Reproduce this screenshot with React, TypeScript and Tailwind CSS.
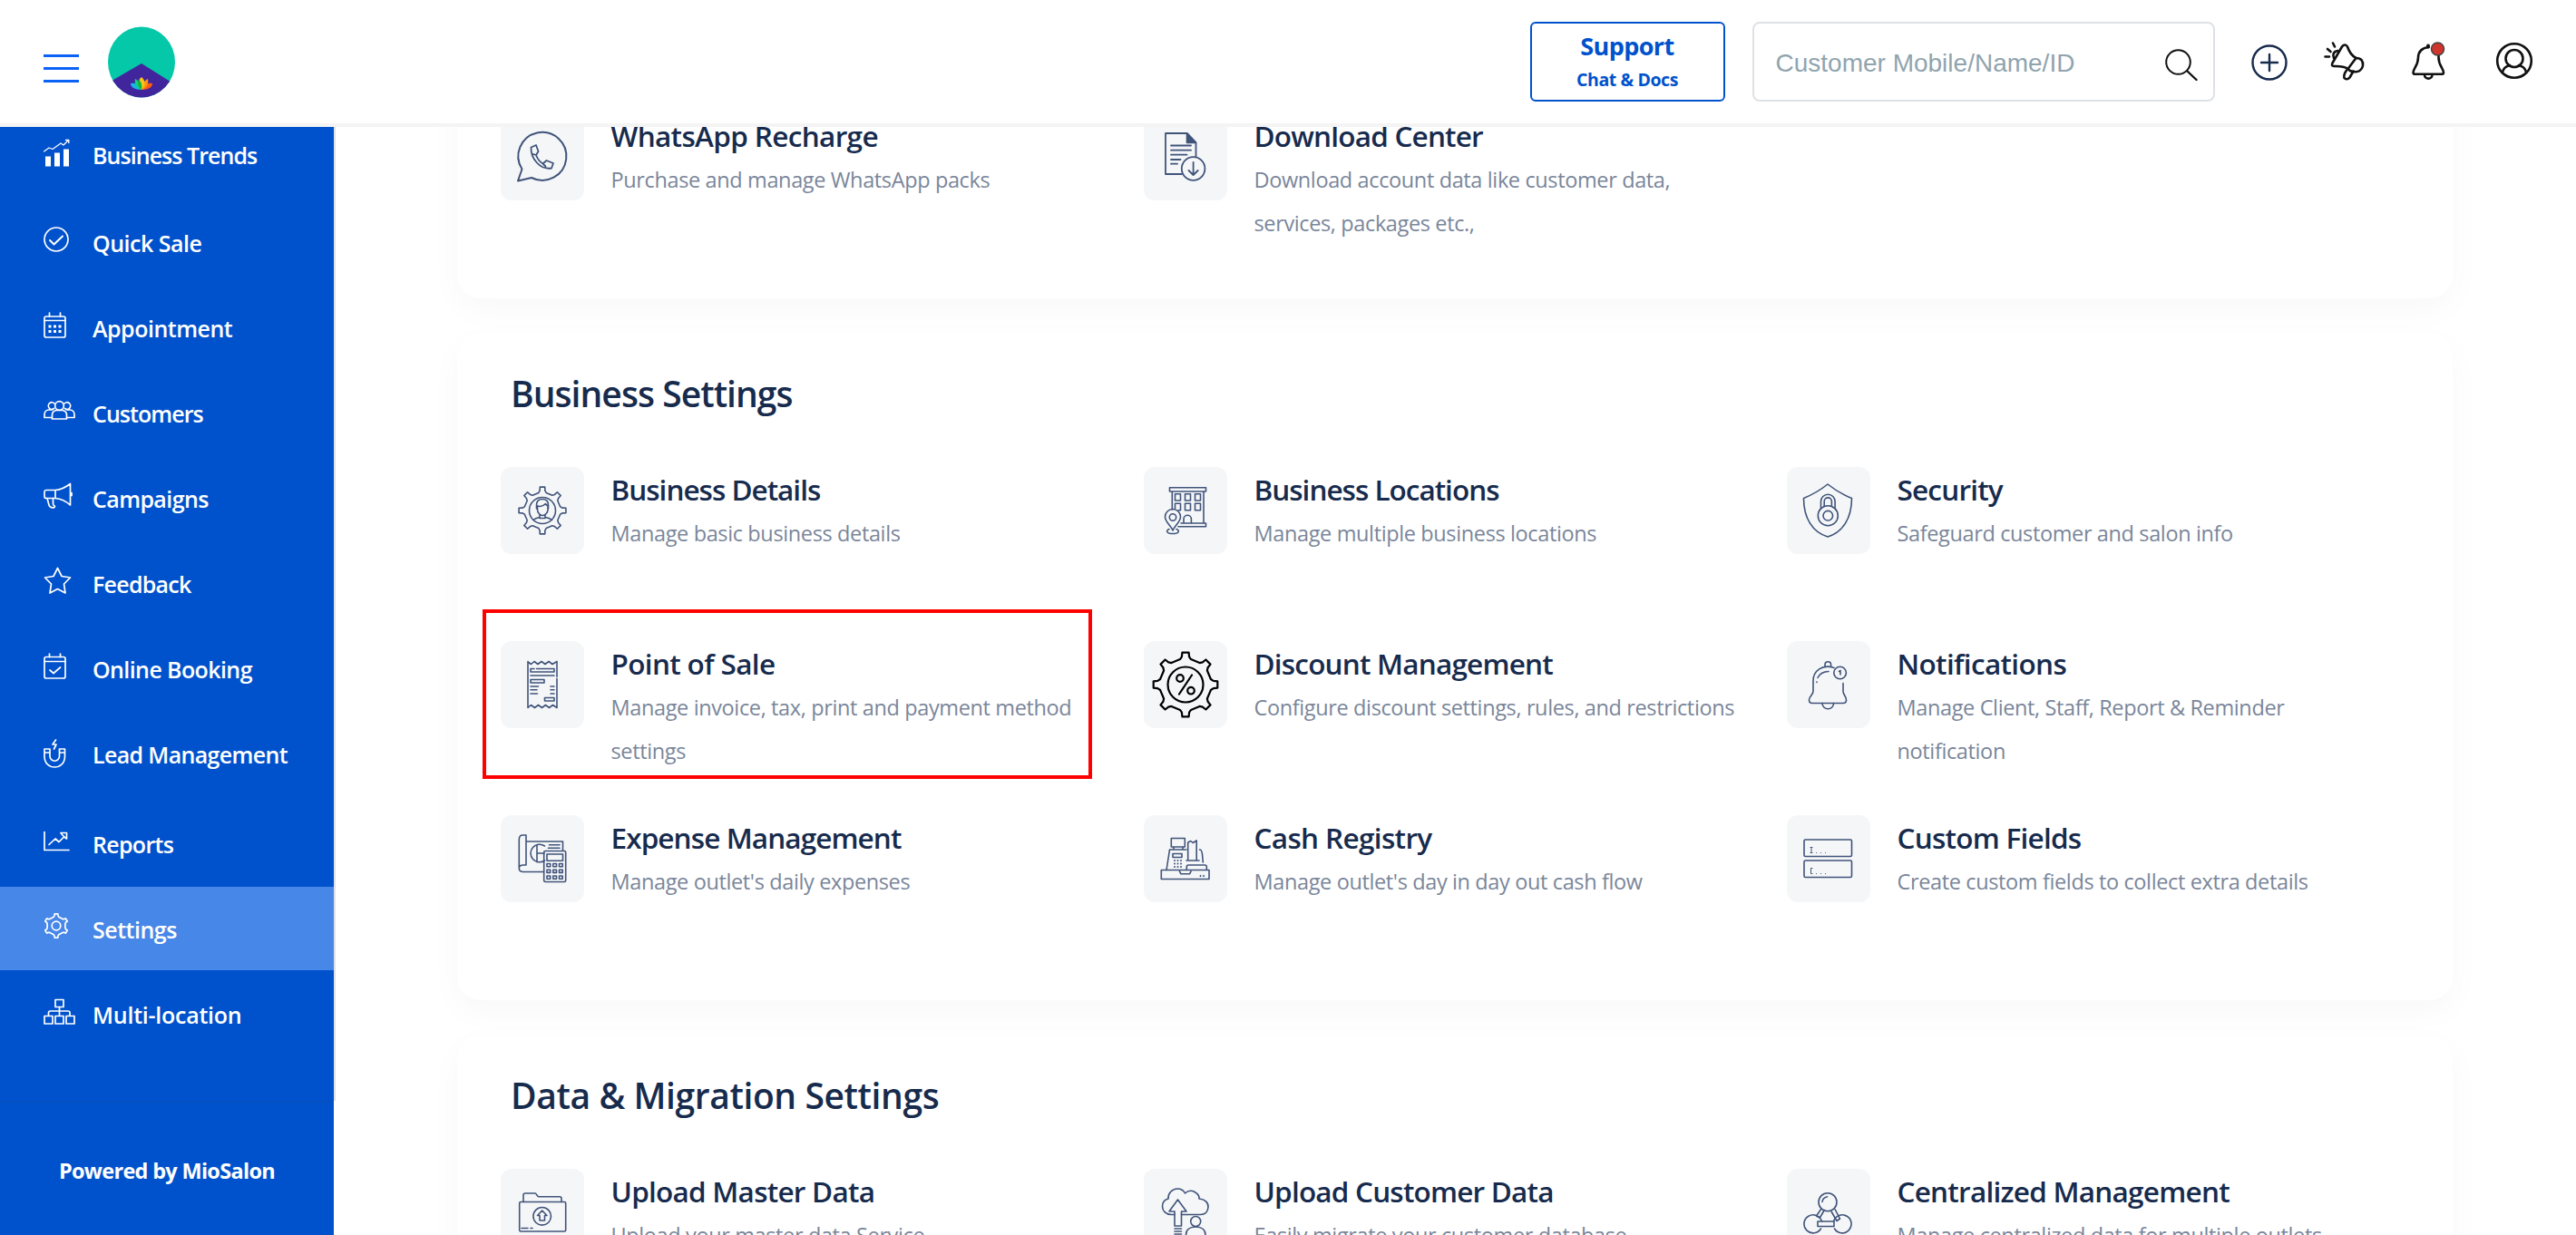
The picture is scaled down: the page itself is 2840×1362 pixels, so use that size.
import type { ReactNode } from "react";

type Item = { title: string; text: string; icon: ReactNode; tracking?: string; active?: boolean };
type NavItem = { label: string; icon: ReactNode; row: string; tracking: string; active?: boolean };

// closed outline of an eight (or six) toothed wheel
const gear = (cx: number, cy: number, outer: number, inner: number, teeth: number) => {
  const step = (Math.PI * 2) / teeth;
  const pts: string[] = [];
  for (let i = 0; i < teeth; i++) {
    const a = i * step - Math.PI / 2;
    [
      [-0.27, inner],
      [-0.17, inner + (outer - inner) * 0.35],
      [-0.13, outer],
      [0.13, outer],
      [0.17, inner + (outer - inner) * 0.35],
      [0.27, inner],
    ].forEach(([o, r]) => {
      pts.push(`${(cx + r * Math.cos(a + o * step)).toFixed(1)} ${(cy + r * Math.sin(a + o * step)).toFixed(1)}`);
    });
  }
  return `M${pts.join("L")}Z`;
};

const TileIcon = ({ children, dark }: { children: ReactNode; dark?: boolean }) => (
  <svg
    viewBox="0 0 92 96"
    className={dark ? "h-24 w-[92px] text-black" : "h-24 w-[92px] text-[#40547a]"}
    fill="none"
    stroke="currentColor"
    strokeWidth={dark ? 2.2 : 1.6}
    strokeLinecap="round"
    strokeLinejoin="round"
  >
    {children}
  </svg>
);

const NavIcon = ({ children }: { children: ReactNode }) => (
  <svg
    viewBox="0 0 40 40"
    className="mt-[25px] h-10 w-10 shrink-0"
    fill="none"
    stroke="currentColor"
    strokeWidth="1.7"
    strokeLinecap="round"
    strokeLinejoin="round"
  >
    {children}
  </svg>
);

const navItems: NavItem[] = [
  {
    label: "Business Trends",
    row: "h-[97px]",
    tracking: "tracking-[-0.95px]",
    icon: (
      <NavIcon>
        <path d="M2 23.5h6v11H2zM12 19.5h6v15h-6zM22 15.5h6v19h-6z" fill="currentColor" stroke="none" />
        <path d="M.5 18 6 14l4 1.5L19 9l3 2 5-5" strokeWidth="1.2" />
        <path d="M24.5 5.5h3.3v3" strokeWidth="1.4" />
      </NavIcon>
    ),
  },
  {
    label: "Quick Sale",
    row: "h-[94px]",
    tracking: "tracking-[-0.5px]",
    icon: (
      <NavIcon>
        <circle cx="14" cy="18" r="13" />
        <path d="m7 19 4.5 4.5 9.5-9" strokeWidth="2" />
      </NavIcon>
    ),
  },
  {
    label: "Appointment",
    row: "h-[94px]",
    tracking: "tracking-[-0.5px]",
    icon: (
      <NavIcon>
        <rect x="1" y="9" width="23" height="23" rx="2" />
        <path d="M1 13.5h23M6.5 5v4M18.5 5v4" />
        <path d="M5.5 20h3M11 20h3M16.5 20h3M5.5 25.5h3M11 25.5h3M16.5 25.5h3" strokeWidth="3" strokeLinecap="butt" />
      </NavIcon>
    ),
  },
  {
    label: "Customers",
    row: "h-[94px]",
    tracking: "tracking-[-0.95px]",
    icon: (
      <NavIcon>
        <circle cx="17.5" cy="13.5" r="4.8" />
        <path d="M9.5 28v-4.5c0-3 2-4.5 4.5-5h7c2.5.5 4.5 2 4.5 5V28z" />
        <path d="M12 11a3.8 3.8 0 1 0-.5 5.5M23 11a3.8 3.8 0 1 1 .5 5.5M9 26.500H1v-3c0-3 2-5.500 5-5.500h3.500M26 26.500h8v-3c0-3-2-5.500-5-5.500h-3.500" />
      </NavIcon>
    ),
  },
  {
    label: "Campaigns",
    row: "h-[94px]",
    tracking: "tracking-[-0.6px]",
    icon: (
      <NavIcon>
        <path d="M13 12.5H3a2 2 0 0 0-2 2v5a2 2 0 0 0 2 2h10zM13 12.5c6-.5 12-3.500 16.500-7V29c-4.500-4-10.500-7-16.500-7.500M31 15.500v3" />
        <path d="M4 21.5 6 29c1 3.500 6.500 3.500 6.500 1.500 0-1-2-.5-2-3v-6" />
      </NavIcon>
    ),
  },
  {
    label: "Feedback",
    row: "h-[94px]",
    tracking: "tracking-[-0.75px]",
    icon: (
      <NavIcon>
        <path d="m15.500 4.500 4.500 9 9.500 1.500-7 7 1.500 10-8.500-4.500L7 32l1.500-10-7-7 9.500-1.500z" />
      </NavIcon>
    ),
  },
  {
    label: "Online Booking",
    row: "h-[94px]",
    tracking: "tracking-[-0.6px]",
    icon: (
      <NavIcon>
        <rect x="1" y="8.5" width="23" height="23.5" rx="2" />
        <path d="M1 13.5h23M6.5 5v3.500M18.500 5v3.500" />
        <path d="m7 23 4 3.500 7.500-6.500" />
      </NavIcon>
    ),
  },
  {
    label: "Lead Management",
    row: "h-[99px]",
    tracking: "tracking-[-0.65px]",
    icon: (
      <NavIcon>
        <path d="M1 16h6v8a5 5 0 0 0 10.500 0v-8h6v8C23.500 32 18 36 12.200 36S1 32 1 24zM1 20h6M17.500 20h6" />
        <path d="m13.500 6-3.500 5h4l-2.500 5" />
      </NavIcon>
    ),
  },
  {
    label: "Reports",
    row: "h-[94px]",
    tracking: "tracking-[-0.7px]",
    icon: (
      <NavIcon>
        <path d="M1 8.500v20h27" />
        <path d="m6 22.500 7-6.500 4 3.500L22.500 14M19 9.500h6.500v6.500l-2-1.500-3-3z" />
      </NavIcon>
    ),
  },
  {
    label: "Settings",
    row: "h-[92px]",
    tracking: "tracking-[-0.5px]",
    active: true,
    icon: (
      <NavIcon>
        <path d={gear(14, 18, 13.2, 10.2, 6)} />
        <circle cx="14" cy="18" r="4.8" />
      </NavIcon>
    ),
  },
  {
    label: "Multi-location",
    row: "h-[94px]",
    tracking: "tracking-[-0.25px]",
    icon: (
      <NavIcon>
        <path d="M13 5.500h9v8h-9zM1 23.500h9V32H1zM13 23.500h9V32h-9zM25 23.500h9V32h-9zM17.500 13.500v10M5.500 23.500V20a2 2 0 0 1 2-2H27a2 2 0 0 1 2 2v3.500" />
      </NavIcon>
    ),
  },
];

const accountItems: Item[] = [
  {
    title: "WhatsApp Recharge",
    text: "Purchase and manage WhatsApp packs",
    icon: (
      <TileIcon>
        <path d="M23.500 61.500A26.500 26.500 0 1 1 34 71l-15 3.500z" strokeWidth="2" />
        <path d="m33.500 37.500 5.500-2.500 2.500 7-2.500 4c1.500 4 4 7.500 7.500 9.500l4-3.500 7.500 3-2 5.500c-13 2-23-11-22.500-23zM39 46l-3-1M46.500 55.500l3 3" strokeWidth="1.8" />
      </TileIcon>
    ),
  },
  {
    title: "Download Center",
    text: "Download account data like customer data,\nservices, packages etc.,",
    tracking: "tracking-[-0.8px]",
    icon: (
      <TileIcon>
        <path d="M42 67H24V22h24l9.500 10v16" strokeWidth="1.8" />
        <path d="M47.500 22v10.500h10z" fill="currentColor" />
        <path d="M30 35.500h22M30 40.700h22M30 45.700h17.500M30 51h10.500M30 55.700h7" strokeWidth="1.8" />
        <circle cx="54.600" cy="61" r="12.800" strokeWidth="1.8" />
        <path d="M54.600 54v13.500M49.500 63l5.100 5 5.100-5" strokeWidth="1.8" />
      </TileIcon>
    ),
  },
];

const businessItems: Item[] = [
  {
    title: "Business Details",
    text: "Manage basic business details",
    tracking: "tracking-[-1px]",
    icon: (
      <TileIcon>
        <path d={gear(46, 48, 26, 20, 8)} />
        <circle cx="46" cy="48" r="14.500" />
        <path d="M39.500 46v-4c0-4.500 3-6.500 6.500-6.500s6.500 2 6.500 6.500v4M40.500 43c3 1 7-.5 9-2.500.5 1.500 1.500 2 2.500 2.500v4c0 3.500-3 6.500-5.800 6.500S40.500 50.500 40.500 47zM43 53v3.500h6V53M36 58.500c2-2 4.500-2.500 7-3M56.500 58.500c-2-2-4.500-2.500-7-3" />
      </TileIcon>
    ),
  },
  {
    title: "Business Locations",
    text: "Manage multiple business locations",
    tracking: "tracking-[-1px]",
    icon: (
      <TileIcon>
        <path d="M28.500 22.700h40V27h-40zM31.300 27v20M66 27v35M41 62h27.500v3.700H38M44 62v-4.500a4.200 4.200 0 0 1 8.400 0V62" />
        <path d="M34.500 29.700h6V37h-6zM45.500 29.700h6V37h-6zM56.500 29.700h6V37h-6zM38 47.700h2.500v-7.400h-6V46M45.500 40.300h6v7.400h-6zM56.500 40.300h6v7.400h-6z" />
        <path d="M32 70c-2-5-8.500-9.500-8.500-15a8.500 8.500 0 0 1 17 0C40.500 60.500 34 65 32 70z" />
        <circle cx="32" cy="55.500" r="3.700" />
        <path d="M28 68.500c-4 1.500-3 5 4 5s8-3.500 4-5" />
      </TileIcon>
    ),
  },
  {
    title: "Security",
    text: "Safeguard customer and salon info",
    tracking: "tracking-[-0.8px]",
    icon: (
      <TileIcon>
        <path d="M45 19c8 6.500 17 11.500 26.500 15.500C71.500 56 62 72 45 77 28 72 18.500 56 18.500 34.500 28 30.500 37 25.500 45 19z" />
        <circle cx="45.300" cy="53.700" r="11" />
        <circle cx="45.300" cy="53.700" r="5.300" />
        <path d="M37.500 46v-8a7.800 7.800 0 0 1 15.600 0v8M41.200 43.500V38a4.100 4.100 0 0 1 8.200 0v5.500" />
      </TileIcon>
    ),
  },
  {
    title: "Point of Sale",
    text: "Manage invoice, tax, print and payment method\nsettings",
    active: true,
    icon: (
      <TileIcon>
        <path d="M30 22.500v51M62 22.500v17M62 41.500v32M30 23l3.500 2.500L37 22.500l4 3 4-3 4 3 4-3 4 3 5-3M30 73.500l3.500-3 4 3 4-3 4 3 4-3 4 3 4-3 4.500 3" />
        <path d="M39.500 30.500H59V34H33v-3.500h4M33 38h26M33 42.500h15V46H33zM33 50h8.500M33 53.700h7M33 58h7.500M55 50h4M55 53.700h4M55 58h4M48.500 62.500H59V66H48.500z" />
      </TileIcon>
    ),
  },
  {
    title: "Discount Management",
    text: "Configure discount settings, rules, and restrictions",
    tracking: "tracking-[-0.8px]",
    icon: (
      <TileIcon dark>
        <path d={gear(46, 48, 35.5, 28.5, 8)} />
        <circle cx="46" cy="48" r="19.500" />
        <circle cx="40" cy="41" r="3.800" />
        <circle cx="52" cy="54.700" r="3.800" />
        <path d="M53 37.500 39 58.500" />
      </TileIcon>
    ),
  },
  {
    title: "Notifications",
    text: "Manage Client, Staff, Report & Reminder\nnotification",
    icon: (
      <TileIcon>
        <path d="M42 28v-2a3.300 3.300 0 0 1 6.600 0v2M52 29.500C39 25 29 33 29 44v11c0 5-4.500 5.500-4.500 10 0 2.500 1 3.500 3.500 3.500h34c2.500 0 3.500-1 3.500-3.500 0-4.500-3.500-5-3.500-10v-8.500" />
        <path d="M39 68.500a6.300 6.300 0 0 0 12.600 0M34 40.500c2.500-5 6-7 12-7M33 45v.5" />
        <circle cx="58.600" cy="35" r="6.800" />
        <path d="M57.500 33.500 59 32.500V37" />
      </TileIcon>
    ),
  },
  {
    title: "Expense Management",
    text: "Manage outlet's daily expenses",
    tracking: "tracking-[-0.9px]",
    icon: (
      <TileIcon>
        <path d="M20.300 59V27c0-3 1.500-5 4-5H28v33h-3c-3 0-4.700 1-4.700 3.500s1.700 4 4.700 4h22.500M28 29h40.500v10M53.500 32.700H65M52.500 36.300H65" />
        <path d="M48.500 50a9.800 9.800 0 1 1 0-16M40 32.500v19.300M40 42h8" />
        <rect x="47.700" y="39.500" width="24" height="34" rx="1.500" />
        <path d="M51 43h17.500v7.300H51zM51 53.500h3.700v3.200H51zM57.800 53.500h3.700v3.200h-3.700zM64.500 53.500h3.700v3.200h-3.700zM51 60.200h3.700v3.200H51zM57.800 60.200h3.700v3.200h-3.700zM64.500 60.200h3.700v3.200h-3.700zM51 67h3.700v3.200H51zM57.800 67h3.700v3.200h-3.700zM64.500 67h3.700v3.200h-3.700z" />
      </TileIcon>
    ),
  },
  {
    title: "Cash Registry",
    text: "Manage outlet's day in day out cash flow",
    icon: (
      <TileIcon>
        <path d="M30.300 25.500h15V35h-15zM33 35v3M43 35v3M47 38H28.500L25 60.500M32 42.500h10v4H32zM61.500 38c2 0 2.500 1 3 5l.8 9" />
        <path d="M34 50v.1M37.500 50v.1M41 50v.1M34 53.500v.1M37.500 53.500v.1M41 53.500v.1M34 57v.1M37.500 57v.1M41 57v.1" strokeWidth="2" />
        <path d="M48.700 50V30l3-1.500 2.500 2 4-2.500V50M47 50h14M47.300 60.500V57c0-1 .5-2 2-2h18c1.500 0 2 1 2 2v3.500M19.300 60.500H72v10H19.300zM39.500 62l1.500 2.800h9.500L52 62M62.500 66.500v1M66 66.500v1" />
      </TileIcon>
    ),
  },
  {
    title: "Custom Fields",
    text: "Create custom fields to collect extra details",
    tracking: "tracking-[-0.75px]",
    icon: (
      <TileIcon>
        <rect x="19" y="27" width="52.500" height="18.500" rx="1.500" />
        <rect x="19" y="50" width="52.500" height="18.500" rx="1.500" />
        <path d="M26 35.500h2M27 35.500v6M26 41.500h2M32.500 41.500h.1M37.500 41.500h.1M42.500 41.500h.1M28 58.500h-1.500v6H28M32.500 64.500h.1M37.500 64.500h.1M42.500 64.500h.1" strokeWidth="1" />
      </TileIcon>
    ),
  },
];

const dataItems: Item[] = [
  {
    title: "Upload Master Data",
    text: "Upload your master data Service,",
    tracking: "tracking-[-0.75px]",
    icon: (
      <TileIcon>
        <path d="M25 36.500V29c0-1.500.5-2 2-2h11c1.500 0 2 3.800 4 3.800h23c1.500 0 2 .5 2 2v3.700" />
        <rect x="20.700" y="36.500" width="51" height="32.500" rx="1.500" />
        <circle cx="45.700" cy="52.300" r="9.800" />
        <path d="m45.700 46 5.300 5.500h-2.500V57h-5.500v-5.500h-2.500zM23 65.500h7M33 65.500h2" />
      </TileIcon>
    ),
  },
  {
    title: "Upload Customer Data",
    text: "Easily migrate your customer database",
    tracking: "tracking-[-0.8px]",
    icon: (
      <TileIcon>
        <path d="M34 50.500h-3.500c-6 0-10-4-10-9 0-4.500 3-7.500 6.500-8.500-.5-6 4.500-11 10-11 4 0 7 2 8.500 5 7-6.500 16 .5 15.500 6 6 .5 10.500 4 10 9.500-.5 5-3 8-8.500 8H41.500" />
        <path d="M37.500 34 47 47h-5.500v16H34V47h-6zM34 66h7.500M34 69h7.500M34 72h7.500" />
        <circle cx="57.200" cy="58" r="5.500" />
        <path d="M46.500 78v-5c0-5.500 4-9 10.700-9S68 67.500 68 73v5" />
      </TileIcon>
    ),
  },
  {
    title: "Centralized Management",
    text: "Manage centralized data for multiple outlets",
    tracking: "tracking-[-0.75px]",
    icon: (
      <TileIcon>
        <circle cx="45" cy="36.700" r="10" />
        <path d="M39 36.500c.3-3.300 2-5 5.500-5.800M38 44l-5.500 8 3.800 2 5-8.500M49 47l6 10.500 3.500-2.500-5.500-10.500" />
        <path d="M38.500 58a10 10 0 1 0-1 8M51.500 58a10 10 0 1 1 1 8" />
        <path d="M34 58h18v5.500H34z" />
      </TileIcon>
    ),
  },
];

const SettingTile = ({ item }: { item: Item }) => (
  <div className="relative flex h-48 items-start whitespace-pre">
    <div className="h-24 w-[92px] shrink-0 overflow-hidden rounded-xl bg-[#f5f6f8]">{item.icon}</div>
    <div className="ml-[29.5px] pt-[3px]">
      <h3
        className={`text-[31.5px] leading-[44px] font-semibold text-[#172b4d] ${item.tracking ?? "tracking-[-0.65px]"}`}
      >
        {item.title}
      </h3>
      <p className="mt-[2px] text-[23.5px] leading-[48px] tracking-[-0.37px] text-[#7a869a]">{item.text}</p>
    </div>
    {item.active && <div className="absolute -top-[35px] -left-[20px] h-[187px] w-[672px] border-4 border-[#ff0000]" />}
  </div>
);

const Card = ({ title, tracking, items }: { title?: string; tracking?: string; items: Item[] }) => (
  <section className="w-[2200px] rounded-[26px] bg-white px-12 pt-[38px] pb-3 shadow-[0_12px_36px_rgba(0,0,0,0.03)]">
    <h2 className={`mb-[53px] h-14 pl-[11px] text-[39px] leading-[56px] font-semibold text-[#172b4d] ${tracking ?? ""}`}>
      {title}
    </h2>
    <div className="grid grid-cols-[709px_709px_auto]">
      {items.map((item) => (
        <SettingTile key={item.title} item={item} />
      ))}
    </div>
  </section>
);

const Logo = () => (
  <svg viewBox="0 0 76 80" className="ml-[31px] h-20 w-[76px]">
    <defs>
      <clipPath id="logo-round">
        <ellipse cx="38" cy="40.500" rx="37" ry="39" />
      </clipPath>
    </defs>
    <g clipPath="url(#logo-round)">
      <rect width="76" height="80" fill="#04c8a8" />
      <path d="M0 64 38 42l38 24v20H0z" fill="#40259c" />
    </g>
    <path d="M38 71c-8 0-12-3-12-7 5-1 10 1 12 7z" fill="#17b5e8" />
    <path d="M38 71c-6-1-8-8-7-12 4 2 7 6 7 12z" fill="#12cf8a" />
    <path d="M38 71c8 0 12-3 12-7-5-1-10 1-12 7z" fill="#ff5a10" />
    <path d="M38 71c6-1 8-8 7-12-4 2-7 6-7 12z" fill="#ff9416" />
    <path d="M38 71c-5-5-4-11 0-14 4 3 5 9 0 14z" fill="#ffc21a" />
    <path d="M38 71c-4-3-5-7-3-11 3 2 4 7 3 11z" fill="#0fb53c" />
  </svg>
);

const Header = () => (
  <header className="relative z-10 flex h-[140px] shrink-0 items-start border-b-4 border-[#f4f4f4] bg-white">
    <div className="mt-[60px] ml-12 flex w-[39px] flex-col gap-[11px]">
      <span className="h-[3px] bg-[#0b63f6]" />
      <span className="h-[3px] bg-[#0b63f6]" />
      <span className="h-[3px] bg-[#0b63f6]" />
    </div>
    <div className="pt-7">
      <Logo />
    </div>
    <button className="mt-6 ml-auto h-[88px] w-[215px] rounded-md border-2 border-[#0052cc] pt-[2px] text-[#0052cc]">
      <span className="block text-[27px] leading-[38px] font-bold tracking-[-0.6px]">Support</span>
      <span className="block text-[19.5px] leading-[36px] font-bold tracking-[-0.4px]">Chat &amp; Docs</span>
    </button>
    <div className="mt-6 ml-[30px] flex h-[88px] w-[510px] items-center justify-between rounded-lg border-2 border-[#dee2e6] pr-[17px] pl-6">
      <span className="pt-[3px] font-['Liberation_Sans',sans-serif] text-[28px] text-[#90a4ae]">
        Customer Mobile/Name/ID
      </span>
      <svg viewBox="0 0 36 36" className="mt-2 h-9 w-9" fill="none" stroke="#111" strokeWidth="2" strokeLinecap="round">
        <circle cx="14.500" cy="14.500" r="13.300" />
        <path d="m24.500 24.500 10 9.500" strokeWidth="2.4" />
      </svg>
    </div>
    {/* quick actions */}
    <svg
      viewBox="2470 30 340 70"
      className="mt-[30px] mr-[30px] ml-[28.5px] h-[70px] w-[340px]"
      fill="none"
      stroke="#111"
      strokeWidth="2.6"
      strokeLinecap="round"
      strokeLinejoin="round"
    >
      <g stroke="#172b4d" strokeWidth="2.4">
        <circle cx="2502" cy="69" r="18.500" />
        <path d="M2493 69h18M2502 60v18" />
      </g>
      <path d="M2582 51.500c1.500-2.500 4.500-3 6 0 2 6 4 9.500 9.500 12.500l-9 12c-5-3.500-10-3-15.500-3-2 0-2.500-1.500-1.500-3.500z" />
      <path d="M2597.500 64c6 0 8 3.500 7.500 8.500-1 5-5 7.500-10 6.500-3 0-5-1-6.500-3" />
      <path d="M2587 77.500c-2 3-3.500 5.500-2.500 8.500 1.500 2 4.500 1.500 6-.5l4-7" />
      <path d="M2577.500 56c-5 .5-6 4.500-4.500 8M2572 47.500l2 4M2566 54l3.500 3M2563.500 62.500h4.500" />
      <path d="M2677.500 52c-7 .5-11.500 5-11.500 11.500 0 9-5.500 12-5.500 16.500 0 1 .8 1.800 2 1.800h29.500c1.200 0 2-.8 2-1.800 0-4.500-5.500-7.500-5.500-16.500V60M2673 82.500c0 5.500 8.500 5.500 8.500 0" />
      <path d="M2677 50.500v1" strokeWidth="4" />
      <circle cx="2687.500" cy="54" r="7" fill="#d0342c" stroke="#444" strokeWidth="1.500" />
      <circle cx="2772" cy="67" r="18.800" />
      <circle cx="2772" cy="64.500" r="9.500" />
      <path d="M2759 79.500c1-4.500 3.500-6.500 8-7.500M2785 79.500c-1-4.500-3.500-6.500-8-7.500" />
    </svg>
  </header>
);

const Sidebar = () => (
  <aside className="flex w-[370px] shrink-0 flex-col text-white">
    <nav className="h-[1074px] overflow-hidden border-r-2 border-[#dee2e6] bg-[#0052cc]">
      <div className="-mt-4">
        {navItems.map((item) => (
          <div
            key={item.label}
            className={item.active ? "mb-[2px] flex h-[92px] items-start bg-[#4787e7] pl-12" : `flex items-start pl-12 ${item.row}`}
          >
            {item.icon}
            <span
              className={`mt-[27px] ml-[14px] text-[25px] leading-[40px] font-[550] whitespace-nowrap ${item.tracking}`}
            >
              {item.label}
            </span>
          </div>
        ))}
      </div>
    </nav>
    <div className="w-[368px] flex-1 border-t-2 border-[#064fc0] bg-[#0052cc] pt-[55px] text-center text-[23.5px] leading-[40px] font-bold tracking-[-0.7px]">
      Powered by MioSalon
    </div>
  </aside>
);

const App = () => {
  return (
    <div className="flex h-[1362px] w-[2840px] flex-col overflow-hidden bg-white font-['Open_Sans',sans-serif]">
      <Header />
      <div className="flex min-h-0 flex-1">
        <Sidebar />
        <main className="min-w-0 flex-1 overflow-hidden pl-[134px]">
          <div className="-mt-[162px] flex flex-col gap-[39px]">
            <Card items={accountItems} />
            <Card title="Business Settings" tracking="tracking-[-0.95px]" items={businessItems} />
            <Card title="Data & Migration Settings" tracking="tracking-[-0.4px]" items={dataItems} />
          </div>
        </main>
      </div>
    </div>
  );
};

export default App;
